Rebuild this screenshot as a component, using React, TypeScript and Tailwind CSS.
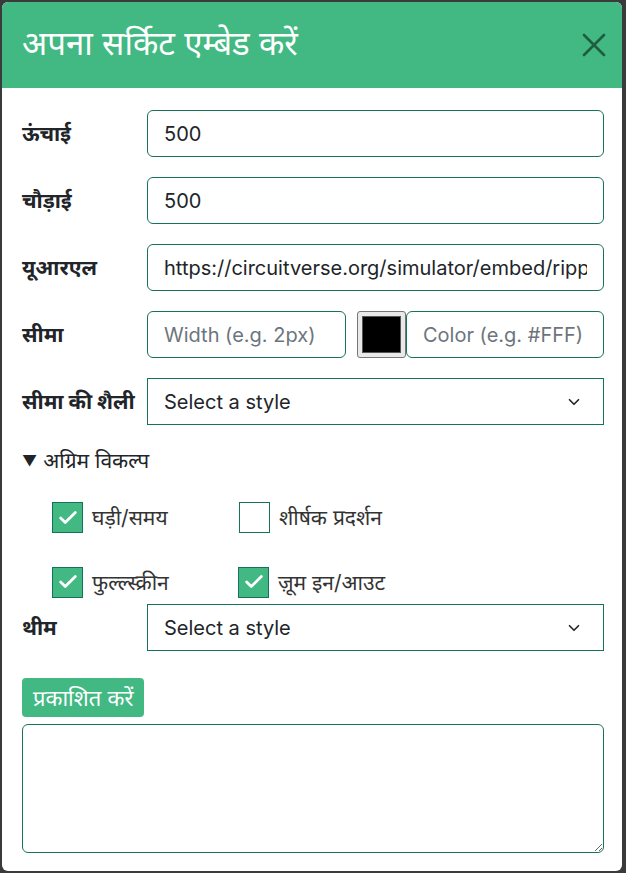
import { X, ChevronDown, Check } from "lucide-react";

const inputCls =
  "h-[47px] rounded-md border border-[#17725a] px-4 text-[20px] text-[#212529] placeholder:text-[#6c757d] outline-none bg-white";

function Row({ label, children }: { label: string; children: React.ReactNode }) {
  return (
    <div className="flex items-center h-[47px]">
      <div className="w-[125px] shrink-0 text-[21px] font-bold text-[#212529] whitespace-nowrap">{label}</div>
      {children}
    </div>
  );
}

function SelectBox() {
  return (
    <div className="flex-1 h-[47px] border border-[#17725a] flex items-center justify-between pl-4 pr-5 text-[20px] text-[#212529] bg-white">
      <span>Select a style</span>
      <ChevronDown className="w-[18px] h-[18px] text-[#212529]" strokeWidth={2.2} />
    </div>
  );
}

function CheckItem({ label, checked }: { label: string; checked?: boolean }) {
  return (
    <div className="flex items-center gap-[9px]">
      <span
        className={
          "w-[31px] h-[31px] border border-[#17725a] flex items-center justify-center " +
          (checked ? "bg-[#42b983]" : "bg-white")
        }
      >
        {checked && <Check className="w-[22px] h-[22px] text-white" strokeWidth={3} />}
      </span>
      <span className="text-[21px] text-[#333]">{label}</span>
    </div>
  );
}

export default function App() {
  return (
    <div
      className="min-h-screen bg-[#3a3a3a] pt-[2px] pl-[2px]"
      style={{ fontFamily: "Inter, 'Noto Sans', sans-serif" }}
    >
      <div className="w-[620px] h-[869px] rounded-md bg-white overflow-hidden flex flex-col">
        {/* header */}
        <div className="h-[86px] bg-[#42b983] flex items-center justify-between pl-5 pr-[8px] shrink-0">
          <h2 className="text-[33px] text-white leading-none pb-1">अपना सर्किट एम्बेड करें</h2>
          <X className="w-[40px] h-[40px] text-[#1e5e40]" strokeWidth={1.6} />
        </div>

        <div className="pl-5 pr-[18px] pt-[22px] flex flex-col">
          <Row label="ऊंचाई">
            <input className={inputCls + " flex-1"} defaultValue="500" />
          </Row>
          <div className="h-5" />
          <Row label="चौड़ाई">
            <input className={inputCls + " flex-1"} defaultValue="500" />
          </Row>
          <div className="h-5" />
          <Row label="यूआरएल">
            <input
              className={inputCls + " flex-1 min-w-0"}
              defaultValue="https://circuitverse.org/simulator/embed/ripple-carry-adder"
            />
          </Row>
          <div className="h-5" />
          <Row label="सीमा">
            <input className={inputCls + " w-[199px]"} placeholder="Width (e.g. 2px)" />
            <div className="ml-[11px] w-[49px] h-[47px] rounded-[3px] border border-[#767676] bg-[#e9e9e9] p-[4px]">
              <div className="w-full h-full bg-black border border-[#555]" />
            </div>
            <input className={inputCls + " flex-1 min-w-0"} placeholder="Color (e.g. #FFF)" />
          </Row>
          <div className="h-5" />
          <Row label="सीमा की शैली">
            <SelectBox />
          </Row>

          <div className="mt-[22px] h-[28px] flex items-center text-[21px] text-[#212529]">
            <span className="text-[15px] mr-[6px]">▼</span>
            अग्रिम विकल्प
          </div>

          <div className="mt-[27px] pl-[30px] flex flex-col gap-[33px]">
            <div className="flex">
              <div className="w-[187px]">
                <CheckItem label="घड़ी/समय" checked />
              </div>
              <CheckItem label="शीर्षक प्रदर्शन" />
            </div>
            <div className="flex">
              <div className="w-[186px]">
                <CheckItem label="फुल्ल्स्क्रीन" checked />
              </div>
              <CheckItem label="ज़ूम इन/आउट" checked />
            </div>
          </div>

          <div className="mt-[6px]">
            <Row label="थीम">
              <SelectBox />
            </Row>
          </div>

          <div className="mt-[27px]">
            <button className="h-[39px] px-[11px] rounded-[4px] bg-[#42b983] text-white text-[22px] leading-none">
              प्रकाशित करें
            </button>
          </div>

          <textarea className="mt-[7px] h-[129px] w-full rounded-md border border-[#17725a] outline-none p-3 text-[16px]" />
        </div>
      </div>
    </div>
  );
}
